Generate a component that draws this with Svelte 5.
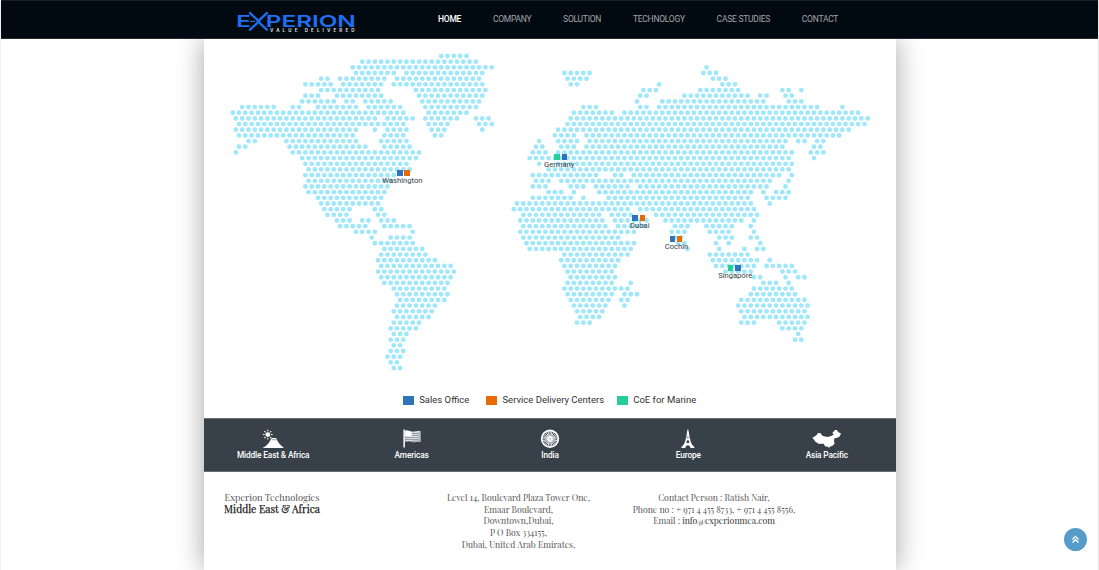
<script>
  const STEP_X = 3.159;
  const STEP_Y = 5.673;
  const ORIGIN_X = 232.7 - 204;
  const ORIGIN_Y = 56 - 39;

  // Land runs for each row of the dotted map: start and end, in page pixels.
  const rows = [
    [[440, 466]],
    [[361.7, 475.3]],
    [[352, 491], [707, 707]],
    [[355.3, 393], [405.7, 481.7], [565.3, 590.7], [703.7, 716.3]],
    [[321, 327.3], [339.7, 384], [396, 478.3], [568.3, 587.3], [713, 725.7]],
    [[305, 330.3], [342.7, 380.7], [393, 481.7], [571.7, 578], [659.7, 659.7], [722.7, 735.3]],
    [[321, 377.7], [415, 484.7], [644, 656.7], [700.7, 738.7], [782.7, 789], [801.7, 801.7]],
    [[305, 317.7], [336.3, 380.7], [418.3, 481.7], [640.7, 647], [685, 748], [760.7, 767], [785.7, 792]],
    [[302, 333.7], [346, 352.3], [365, 390.3], [421.3, 478.3], [637.7, 637.7], [663, 763.7], [789, 801.7]],
    [[242, 273.7], [292.7, 298.7], [317.7, 355.3], [368, 399.3], [424.3, 475.3], [584.3, 597], [640.7, 647], [659.7, 817.3], [842.3, 842.3]],
    [[232.7, 402.7], [427.7, 465.7], [574.7, 612.7], [625, 858]],
    [[236, 374.3], [387, 412], [424.3, 456.3], [475, 487.7], [571.7, 867.7]],
    [[239, 402.7], [427.7, 446.7], [478.3, 491], [568.3, 864.7]],
    [[236, 355.3], [374.3, 374.3], [387, 405.7], [431, 443.7], [481.7, 481.7], [559, 848.7]],
    [[239, 352.3], [384, 405.7], [434, 440.3], [556, 575], [587.3, 839.3]],
    [[248.3, 254.7], [286.3, 355.3], [380.7, 405.7], [540, 540], [559, 578], [590.7, 785.7], [798.3, 804.7], [817.3, 823.7]],
    [[239, 245.3], [289.3, 365], [384, 409], [537, 543.3], [562.3, 575], [587.3, 782.7], [814, 820.3]],
    [[236, 236], [292.7, 418.3], [534, 546.7], [559, 792], [811, 823.7]],
    [[302, 415], [530.7, 549.7], [556, 789], [814, 814]],
    [[305, 405.7], [540.3, 540.3], [559, 792]],
    [[308.3, 409], [549.7, 789]],
    [[305, 393], [534, 597], [615.7, 622], [634.7, 779.3], [792, 792]],
    [[308.3, 390], [537, 549.7], [562.3, 770], [789, 789]],
    [[305, 387], [534, 546.7], [571.7, 584.3], [597, 628.3], [640.7, 767], [785.7, 785.7]],
    [[308.3, 384], [549.7, 562.3], [575, 575], [600, 751], [763.7, 763.7], [776.3, 789]],
    [[317.7, 380.7], [534, 571.7], [584.3, 584.3], [609.3, 748], [767, 785.7]],
    [[321, 377.7], [518, 751], [770, 770]],
    [[324, 349.3], [374.3, 380.7], [515, 630], [642.7, 754.3]],
    [[327.3, 346], [377.7, 384], [524.3, 601], [612.3, 631], [656.7, 754.3]],
    [[336.7, 349], [361.7, 368], [380.7, 393.3], [521, 603.7], [615.7, 648], [666, 741.7], [754.3, 754.3]],
    [[339.7, 364.7], [383.7, 409], [524.3, 606], [618.7, 644], [675.3, 688], [707, 732.3], [751, 751]],
    [[355.3, 374.3], [412, 412], [521, 634.3], [672.3, 685], [710, 729], [754.3, 754.3]],
    [[371, 371], [390, 409], [524.3, 618.7], [675.5, 682], [720, 732.3], [751, 757.3]],
    [[374.3, 412], [527.3, 634.3], [678, 685], [716.7, 716.7], [729, 729], [760.3, 760.3]],
    [[383.7, 421.7], [530.7, 631.3], [688, 688], [719.7, 719.7], [745, 745], [757.3, 763.7]],
    [[380.7, 424.7], [565, 628.3], [710, 748]],
    [[377.3, 434.3], [562, 618.7], [713.3, 757.3], [770, 770]],
    [[380.7, 450], [565, 615.7], [716.7, 754.3], [766.7, 792]],
    [[377.3, 453], [568.3, 612.3], [726, 751], [782.7, 795.3]],
    [[380.7, 450], [571.3, 615.7], [754.3, 760.7], [785.7, 785.7], [798.3, 804.7]],
    [[383.7, 447], [568.3, 612.3], [631.3, 631.3], [763.7, 776.3], [789, 789]],
    [[393, 444], [565, 628.3], [754.3, 792]],
    [[396.3, 447], [568.3, 609.3], [625, 637.7], [751, 795.3]],
    [[399.3, 444], [571.3, 609], [622, 628], [741.7, 804.7]],
    [[396.3, 434], [574.7, 606], [625, 625], [738.3, 808]],
    [[393, 431], [577.7, 603], [741.7, 804.7]],
    [[396, 428], [581, 600], [744.7, 808]],
    [[393, 418.3], [577.7, 590], [741.7, 754.3], [779.3, 804.7]],
    [[390, 415.3], [782.7, 801.3]],
    [[393, 406], [798.3, 798.3]],
    [[390, 402.7], [795.3, 801.3]],
    [[393, 399.3]],
    [[390, 402.7]],
    [[387, 399.3]],
    [[390, 396.3]],
    [[393, 399.3]]
  ];

  const snap = (x, r) => {
    const h = (x - 232.7) / STEP_X;
    const odd = r % 2;
    return Math.round((h - odd) / 2) * 2 + odd;
  };

  const dots = rows.flatMap((runs, r) =>
    runs.flatMap(([a, b]) => {
      const out = [];
      for (let h = snap(a, r); h <= snap(b, r); h += 2) {
        out.push([ORIGIN_X + h * STEP_X, ORIGIN_Y + r * STEP_Y]);
      }
      return out;
    })
  );

  const BLUE = '#2f74b9';
  const ORANGE = '#e86a05';
  const GREEN = '#26cd9a';

  const places = [
    { name: 'Washington', x: 199.4, y: 131, colors: [BLUE, ORANGE], shift: -1 },
    { name: 'Germany', x: 356.8, y: 114.5, colors: [GREEN, BLUE], shift: -1.6 },
    { name: 'Dubai', x: 434.8, y: 175.5, colors: [BLUE, ORANGE], shift: 1 },
    { name: 'Cochin', x: 472, y: 196.5, colors: [BLUE, ORANGE], shift: 0.5 },
    { name: 'Singapore', x: 530.2, y: 225.5, colors: [GREEN, BLUE], shift: 1 }
  ];

  const nav = ['HOME', 'COMPANY', 'SOLUTION', 'TECHNOLOGY', 'CASE STUDIES', 'CONTACT'];
  const regions = ['Middle East & Africa', 'Americas', 'India', 'Europe', 'Asia Pacific'];
  const spokes = Array.from({ length: 24 }, (_, i) => i * 15);
  const rays = Array.from({ length: 8 }, (_, i) => i * 45);
</script>

<div class="page">
  <header>
    <svg class="logo" width="118" height="24" viewBox="237 10 118 24">
      <g fill="#1f6ff2" font-family="Inter" font-weight="600" font-size="16.4">
        <text x="236.2" y="27.2" textLength="14.5" lengthAdjust="spacingAndGlyphs">E</text>
        <text x="265.8" y="27.2" textLength="90" lengthAdjust="spacingAndGlyphs">PERION</text>
      </g>
      <g fill="none" stroke="#1f6ff2" stroke-width="2.3">
        <path d="M249.2 12.4 L257.6 20 V22.8 L249.2 30.4" />
        <path d="M267.6 12.4 L259.4 20 V22.8 L267.6 30.4" />
        <path d="M250 21.4 H255" stroke-width="1.1" />
      </g>
      <text class="tag" x="270" y="32" textLength="84.5">VALUE DELIVERED</text>
    </svg>
    <nav>
      {#each nav as item, i}
        <a href="#top" class:active={i === 0}>{item}</a>
      {/each}
    </nav>
  </header>

  <main>
    <section class="map">
      <svg class="world" width="692" height="345" viewBox="0 0 692 345">
        {#each dots as [x, y]}
          <circle cx={x} cy={y} r="2.4" />
        {/each}
      </svg>
      {#each places as p}
        <div class="place" style="left:{p.x}px;top:{p.y}px">
          <div class="squares">
            {#each p.colors as c}<i style="background:{c}"></i>{/each}
          </div>
          <span style="margin-left:{p.shift * 2}px">{p.name}</span>
        </div>
      {/each}
      <div class="legend">
        <div class="key"><i style="background:{BLUE}"></i>Sales Office</div>
        <div class="key second"><i style="background:{ORANGE}"></i>Service Delivery Centers</div>
        <div class="key third"><i style="background:{GREEN}"></i>CoE for Marine</div>
      </div>
    </section>

    <section class="regions">
      {#each regions as name, i}
        <div class="region">
          <svg width="30" height="20" viewBox="0 0 30 20" fill="#fff">
            {#if i === 0}
              <path d="M4.5 19 C9 17 11.5 13.5 13.5 9 H18 C20 13.5 22 16 25.5 18.4 V19 Z" />
              <path d="M13.4 9.7 L14.8 11.2 L15.8 10 L17 11.4 L18.2 9.6" fill="none" stroke="#38404a" stroke-width=".5" />
              <circle cx="9.8" cy="5.6" r="2.4" />
              {#each rays as a}
                <path d="M9.8 .7 V2.4" stroke="#fff" stroke-width="1" transform="rotate({a} 9.8 5.6)" />
              {/each}
            {:else if i === 1}
              <path d="M6.4 .6 H7.9 V18.4 H6.4 Z" />
              <path d="M8.2 1.7 C12 .6 13.5 3.3 17 2.5 C19.5 2 21.5 1.7 23.6 2.3 V13 C20 12.2 18.5 13.8 15.5 13 C12.5 12 11 11.8 8.2 12.7 Z" fill="#dfe2e5" />
              <path d="M8.2 1.7 C11 .9 12.5 2.2 14.5 2.7 V7.8 C12 7.2 10.4 6.7 8.2 7.2 Z" />
              <path d="M14.8 4.4 Q19 4.8 23.4 3.9 M14.8 6.3 Q19 6.7 23.4 5.8 M8.4 8.8 C13 7.5 16 9.8 23.4 7.8 M8.4 10.7 C13 9.6 16 11.8 23.4 9.8 M14.8 12.2 Q19 12.6 23.4 11.6" fill="none" stroke="#626a73" stroke-width=".65" />
            {:else if i === 2}
              <circle cx="15" cy="9.8" r="8.3" fill="none" stroke="#fff" stroke-width="1.8" />
              {#each spokes as a}
                <path d="M15 2.2 V8.3" stroke="#fff" stroke-width=".8" transform="rotate({a} 15 9.8)" />
              {/each}
              <circle cx="15" cy="9.8" r="2.2" />
              <circle cx="15" cy="9.8" r=".6" fill="#38404a" />
            {:else if i === 3}
              <path fill-rule="evenodd" d="M14.5 .5 H15.2 L15.9 3.5 L16.7 9.6 H17.2 V11 L18.7 15.2 L21.4 18 V19 H17.5 C17.3 15.4 12.5 15.4 12.3 19 H8.4 V18 L11 15.2 L12.6 11 V9.6 H13.1 L13.9 3.5 Z M14.2 11.3 L13.2 13.9 H16.5 L15.6 11.3 Z M14.7 7 L14.4 9.5 H15.4 L15.1 7 Z" />
            {:else}
              <path d="M.5 8.7 L4.5 6.2 L6 4 L8.2 4 L10.8 7.1 L15.5 8 L19.2 7 L21.8 5.5 L20.3 4.1 L23 1 L25 .9 L26 3 L29 4.5 L27.7 7.6 L25.2 8.8 L22.2 9.6 L22 12.5 L22.7 14.5 L20.5 16.8 L17.8 17.8 L17 19 L15.7 17.5 L13.2 17.4 L11.7 14.8 L6.5 14.7 L3.5 12.8 Z" />
            {/if}
          </svg>
          <span>{name}</span>
        </div>
      {/each}
    </section>

    <section class="info">
      <div class="office">
        <p>Experion Technologies</p>
        <p class="strong">Middle East &amp; Africa</p>
      </div>
      <div class="address">
        <p>Level 14, Boulevard Plaza Tower One,</p>
        <p>Emaar Boulevard,</p>
        <p>Downtown,Dubai,</p>
        <p>P O Box 334155,</p>
        <p>Dubai, United Arab Emirates,</p>
      </div>
      <div class="contact">
        <p>Contact Person : Ratish Nair,</p>
        <p>Phone no : + 971 4 455 8733, + 971 4 455 8556,</p>
        <p>Email : <b>info@experionmea.com</b></p>
      </div>
    </section>
  </main>

  <a class="to-top" href="#top" aria-label="Back to top">
    <svg width="9" height="9" viewBox="0 0 9 9" fill="none" stroke="#fff" stroke-width="1.4">
      <path d="M1.5 4.4 L4.5 1.5 L7.5 4.4 M1.5 7.6 L4.5 4.7 L7.5 7.6" />
    </svg>
  </a>
</div>

<style>
  :global(body) { margin: 0; background: #fff; }
  .page {
    width: 1099px;
    height: 570px;
    box-sizing: border-box;
    overflow: hidden;
    position: relative;
    border-right: 1px solid #e9e9e9;
    border-left: 1px solid #f3f3f3;
    font-family: Roboto, sans-serif;
  }
  header {
    position: relative;
    z-index: 1;
    height: 39px;
    margin: 0 0 0 -1px;
    box-sizing: border-box;
    display: flex;
    align-items: center;
    background: #020a11;
    border-top: 1px solid #17202a;
    border-bottom: 1px solid #252a30;
  }
  .logo { margin: 5px 0 0 237px; }
  .tag { font: 700 4.5px Inter, sans-serif; fill: #d7dade; }
  nav { display: flex; gap: 31.75px; margin: -1px 0 0 83px; }
  nav a { color: #a2a5a8; text-decoration: none; font-size: 8.5px; letter-spacing: -0.25px; line-height: 12px; white-space: nowrap; }
  nav a.active { color: #fff; font-weight: 500; }
  main {
    width: 692px;
    height: 531px;
    margin-left: 203px;
    background: #fff;
    box-shadow: 0 0 26px rgba(0, 0, 0, 0.36);
  }
  .map { position: relative; height: 379px; display: flex; flex-direction: column; }
  .world { display: block; fill: #a0e7fa; }
  .place {
    position: absolute;
    width: 0;
    display: flex;
    flex-direction: column;
    align-items: center;
    font-size: 7.6px;
    line-height: 8px;
    color: #333e45;
    white-space: nowrap;
  }
  .squares { display: flex; gap: 1.6px; height: 6px; margin-bottom: 1px; }
  .squares i { width: 5.7px; height: 6px; }
  .legend { display: flex; margin: 9px 0 0 199px; font-size: 9.5px; line-height: 14px; color: #333; }
  .key { display: flex; align-items: center; gap: 5.2px; white-space: nowrap; }
  .key i { width: 11px; height: 9px; }
  .second { margin-left: 17px; }
  .third { margin-left: 13px; }
  .regions {
    height: 54px;
    box-sizing: border-box;
    display: grid;
    grid-template-columns: repeat(5, 1fr);
    background: #38404a;
    border-top: 1px solid #676d75;
    border-bottom: 1px solid #676d75;
  }
  .region { display: flex; flex-direction: column; align-items: center; padding-top: 9.5px; }
  .region svg { display: block; }
  .region span { color: #fff; font-size: 8.3px; letter-spacing: -0.14px; font-weight: 500; line-height: 10px; margin-top: 1.5px; white-space: nowrap; }
  .info {
    display: grid;
    grid-template-columns: 136px 357px 34px;
    padding-top: 20px;
    font-family: "Playfair Display", "Liberation Serif", serif;
    font-size: 8.7px;
    line-height: 11.65px;
    color: #555;
    text-align: center;
  }
  .info p { margin: 0; white-space: nowrap; }
  .office { font-size: 9.3px; }
  .strong { color: #222; -webkit-text-stroke: 0.25px #222; font-size: 10.4px; padding-top: 0.5px; }
  .info b { font-weight: 400; color: #333; }
  .contact { display: flex; flex-direction: column; align-items: center; }
  .to-top {
    position: absolute;
    right: 11px;
    bottom: 19px;
    width: 23px;
    height: 23px;
    border-radius: 50%;
    background: #559ccb;
    display: flex;
    align-items: center;
    justify-content: center;
  }
</style>
